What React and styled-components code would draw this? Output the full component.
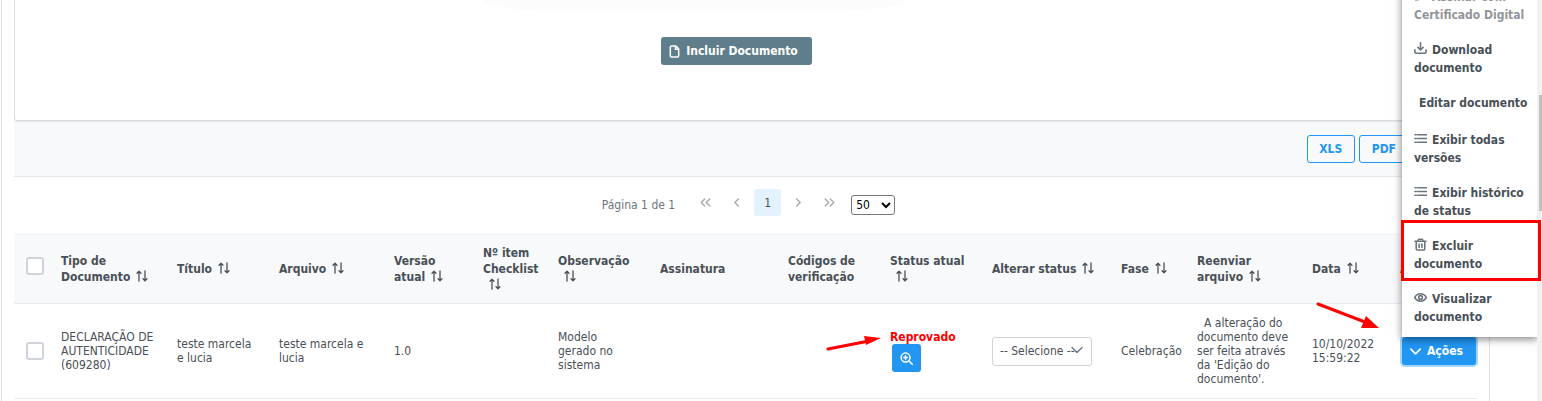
import React from "react";
import styled, { createGlobalStyle } from "styled-components";

const columns = [
  { label: "Tipo de Documento", width: 116, sortable: true },
  { label: "Título", width: 102, sortable: true },
  { label: "Arquivo", width: 115, sortable: true },
  { label: "Versão atual", width: 89, sortable: true },
  { label: "Nº item Checklist", width: 75, sortable: true },
  { label: "Observação", width: 102, sortable: true },
  { label: "Assinatura", width: 128 },
  { label: "Códigos de verificação", width: 102 },
  { label: "Status atual", width: 102, sortable: true },
  { label: "Alterar status", width: 129, sortable: true },
  { label: "Fase", width: 76, sortable: true },
  { label: "Reenviar arquivo", width: 115, sortable: true },
  { label: "Data", width: 88, sortable: true },
  { label: "Ações", width: 89 },
];

const menuItems = [
  { label: "Assinar com Certificado Digital", icon: "pencil", disabled: true },
  { label: "Download documento", icon: "download" },
  { label: "Editar documento" },
  { label: "Exibir todas versões", icon: "list" },
  { label: "Exibir histórico de status", icon: "list" },
  { label: "Excluir documento", icon: "trash", marked: true },
  { label: "Visualizar documento", icon: "eye" },
];

const paths = {
  file: <path d="M8.500 1H4A1.500 1.500 0 0 0 2.500 2.500v9A1.500 1.500 0 0 0 4 13h6a1.500 1.500 0 0 0 1.500-1.500V4zM8 1v3.500h3.500" />,
  pencil: <path d="M2 12l.6-3.300L9.300 2l2.700 2.700-6.700 6.700z" />,
  download: <path d="M7 .8v7.600M4.200 5.800L7 8.600l2.800-2.800M1 8.500v2.400a1.300 1.300 0 0 0 1.300 1.300h9.400a1.300 1.300 0 0 0 1.300-1.300V8.500" />,
  list: <path d="M1 3h1.400M4 3h9.500M1 7h1.400M4 7h9.500M1 11h1.400M4 11h9.500" />,
  trash: <path d="M1 3.500h12M4.500 3.500V2.300A1 1 0 0 1 5.500 1.300h3a1 1 0 0 1 1 1v1.200M2.400 3.500v8a1.400 1.400 0 0 0 1.400 1.400h6.400a1.400 1.400 0 0 0 1.400-1.400v-8M5.500 6.500v3.600M8.500 6.500v3.600" />,
  eye: (
    <>
      <path d="M.8 7C2.300 4.300 4.500 3 7 3s4.700 1.300 6.200 4C11.700 9.700 9.500 11 7 11S2.300 9.700.8 7z" />
      <circle cx="7" cy="7" r="2" />
    </>
  ),
  zoom: (
    <>
      <circle cx="6" cy="6" r="4.800" />
      <path d="M9.600 9.600L13.200 13.200M6 4v4M4 6h4" />
    </>
  ),
  down: <path d="M2 4.500l5 5 5-5" />,
  left: <path d="M9 3.200L5.200 7 9 10.800" />,
  right: <path d="M5 3.200L8.800 7 5 10.800" />,
  first: <path d="M6.200 3.200L2.400 7l3.800 3.800M11.600 3.200L7.800 7l3.800 3.800" />,
  last: <path d="M2.400 3.200L6.200 7l-3.800 3.800M7.800 3.200L11.600 7l-3.800 3.800" />,
  sort: <path d="M3.500 13V1.500M1.200 3.800l2.300-2.300 2.300 2.300M10.500 1v11.500M8.200 10.200l2.300 2.300 2.300-2.300" />,
};

const Icon = ({ name, size = 13, weight = 1.4, className }) => (
  <svg
    className={className}
    width={size}
    height={size}
    viewBox="0 0 14 14"
    fill="none"
    stroke="currentColor"
    strokeWidth={weight}
    strokeLinecap="round"
    strokeLinejoin="round"
    aria-hidden="true"
  >
    {paths[name]}
  </svg>
);

const Arrow = ({ className, width, height, line, head }) => (
  <svg className={className} width={width} height={height} aria-hidden="true">
    <path d={line} stroke="#ff0000" strokeWidth="3" strokeLinecap="round" />
    <path d={head} fill="#ff0000" />
  </svg>
);

const ActionsMenu = () => (
  <Menu>
    {menuItems.map((item) => (
      <MenuItem key={item.label}>
        <MenuLink href="#" $disabled={item.disabled}>
          {item.icon ? <MenuIcon name={item.icon} weight={1.7} /> : null}
          <MenuText>{item.label}</MenuText>
        </MenuLink>
        {item.marked ? <Highlight /> : null}
      </MenuItem>
    ))}
  </Menu>
);

const Pagination = () => (
  <Paginator aria-label="Paginação">
    <PageReport>Página 1 de 1</PageReport>
    <PageButtons>
      <PageButton type="button" aria-label="Primeira">
        <Icon name="first" size={13} weight={1.6} />
      </PageButton>
      <PageButton type="button" aria-label="Anterior">
        <Icon name="left" size={13} weight={1.6} />
      </PageButton>
      <PageButton type="button" $active>
        1
      </PageButton>
      <PageButton type="button" aria-label="Próxima">
        <Icon name="right" size={13} weight={1.6} />
      </PageButton>
      <PageButton type="button" aria-label="Última">
        <Icon name="last" size={13} weight={1.6} />
      </PageButton>
    </PageButtons>
    <RowsSelect aria-label="Linhas por página" defaultValue="50">
      <option value="50">50</option>
    </RowsSelect>
  </Paginator>
);

const DocumentsTable = () => (
  <Table>
    <colgroup>
      <Col $width={35} />
      {columns.map((c) => (
        <Col key={c.label} $width={c.width} />
      ))}
    </colgroup>
    <thead>
      <tr>
        <Th>
          <Checkbox type="checkbox" aria-label="Selecionar todos" />
        </Th>
        {columns.map((c) => (
          <Th key={c.label}>
            {c.label}
            {c.sortable ? <SortIcon name="sort" size={12} weight={1.5} /> : null}
          </Th>
        ))}
      </tr>
    </thead>
    <tbody>
      <tr>
        <Td>
          <Checkbox type="checkbox" aria-label="Selecionar documento" />
        </Td>
        <Td>DECLARAÇÃO DE AUTENTICIDADE (609280)</Td>
        <Td>teste marcela e lucia</Td>
        <Td>teste marcela e lucia</Td>
        <Td>1.0</Td>
        <Td />
        <Td>Modelo gerado no sistema</Td>
        <Td />
        <Td />
        <Td>
          <Anchor>
            <Status>Reprovado</Status>
            <ZoomButton type="button" aria-label="Ver status">
              <Icon name="zoom" size={13} weight={1.6} />
            </ZoomButton>
            <StatusArrow
              width={58}
              height={20}
              line="M3 16L44 8"
              head="M39 3L56 5L41 12Z"
            />
          </Anchor>
        </Td>
        <Td>
          <SelectWrapper>
            <StatusSelect aria-label="Alterar status">
              <option>-- Selecione --</option>
            </StatusSelect>
            <SelectChevron name="down" size={14} />
          </SelectWrapper>
        </Td>
        <Td>Celebração</Td>
        <Td>
          <Notice>
            A alteração do documento deve ser feita através da 'Edição do
            documento'.
          </Notice>
        </Td>
        <Td>10/10/2022 15:59:22</Td>
        <Td>
          <Anchor>
            <ActionsButton type="button">
              <Icon name="down" size={13} weight={1.8} />
              Ações
            </ActionsButton>
            <ActionsMenu />
            <ActionsArrow
              width={66}
              height={30}
              line="M3 3L50 21"
              head="M51 15L64 27L46 27Z"
            />
          </Anchor>
        </Td>
      </tr>
    </tbody>
  </Table>
);

export default function App() {
  return (
    <>
      <GlobalStyle />
      <Frame>
        <UploadPanel>
          <IncludeButton type="button">
            <Icon name="file" size={13} weight={1.6} />
            Incluir Documento
          </IncludeButton>
        </UploadPanel>
        <Toolbar>
          <ExportButton type="button">XLS</ExportButton>
          <ExportButton type="button">PDF</ExportButton>
        </Toolbar>
        <Pagination />
        <DocumentsTable />
      </Frame>
      <ScrollTrack>
        <ScrollThumb />
      </ScrollTrack>
    </>
  );
}

const GlobalStyle = createGlobalStyle`
  * {
    box-sizing: border-box;
  }

  body {
    margin: 0;
    overflow: hidden;
    background: #ffffff;
    color: #495057;
  }

  body, button, select, input {
    font-family: "DejaVu Sans Condensed", "DejaVu Sans", sans-serif;
    font-size: 12px;
  }
`;

const Frame = styled.main`
  min-height: 100vh;
  margin: 0 52px 0 1px;
  padding: 0 12px;
  border: 1px solid #dee2e6;
  border-width: 0 1px;
`;

const UploadPanel = styled.section`
  position: relative;
  display: flex;
  justify-content: center;
  padding: 37px 18px 55px 0;
  border: 1px solid #d9dde2;
  border-top: none;
  border-radius: 0 0 3px 3px;

  /* lower edge of the faded drop area */
  &::before {
    content: "";
    position: absolute;
    top: 0;
    left: 32%;
    width: 29%;
    height: 11px;
    border-radius: 0 0 80px 80px / 0 0 11px 11px;
    background: #fcfcfc;
  }
`;

const SolidButton = styled.button`
  display: inline-flex;
  align-items: center;
  height: 28px;
  border: none;
  border-radius: 3px;
  background: #2196f3;
  color: #ffffff;
  font-weight: 700;
`;

const IncludeButton = styled(SolidButton)`
  gap: 5px;
  padding: 0 14px 0 7px;
  background: #607d8b;
`;

const Toolbar = styled.div`
  display: flex;
  justify-content: flex-end;
  gap: 4px;
  padding: 13px 68px 13px 0;
  border: 1px solid #e3e8ec;
  border-width: 1px 0;
  background: #f8f9fa;
`;

const ExportButton = styled.button`
  min-width: 48px;
  height: 28px;
  padding: 0 11px;
  border: 1px solid #2196f3;
  border-radius: 3px;
  background: transparent;
  color: #2196f3;
  font-weight: 700;

  & + & {
    padding: 0 12px;
  }
`;

const Paginator = styled.nav`
  display: flex;
  justify-content: center;
  align-items: center;
  padding: 12px 0 17px 6px;
`;

const PageReport = styled.span`
  padding-top: 5px;
  margin-right: 17px;
  color: #6c757d;
`;

const PageButtons = styled.div`
  display: flex;
  gap: 4px;
`;

const PageButton = styled.button`
  display: flex;
  justify-content: center;
  align-items: center;
  width: 27px;
  height: 27px;
  padding: 0;
  border: none;
  border-radius: 3px;
  background: ${(p) => (p.$active ? "#e3f2fd" : "transparent")};
  color: ${(p) => (p.$active ? "#495057" : "#a6abb0")};
`;

const RowsSelect = styled.select`
  width: 44px;
  height: 20px;
  margin: 5px 0 0 8px;
  padding: 0;
  border: 1px solid #767676;
  border-radius: 3px;
  background: #ffffff;
  color: #000000;
`;

const Table = styled.table`
  width: 100%;
  table-layout: fixed;
  border-collapse: separate;
  border-spacing: 0;
`;

const Col = styled.col`
  width: ${(p) => p.$width}px;
`;

const Th = styled.th`
  height: 71px;
  padding: 2px 10px 0 12px;
  border-bottom: 1px solid #e9ecef;
  background: #f8f9fa;
  line-height: 16px;
  text-align: left;

  &:first-child {
    padding: 0 0 4px 12px;
  }
`;

const Td = styled.td`
  height: 95px;
  padding: 0 10px 0 12px;
  border-bottom: 1px solid #e9ecef;
  line-height: 14px;

  &:first-child,
  &:last-child {
    padding-right: 0;
  }
`;

const SortIcon = styled(Icon)`
  display: inline-block;
  margin-left: 6px;
  vertical-align: -1px;
`;

const Checkbox = styled.input`
  display: block;
  appearance: none;
  width: 18px;
  height: 18px;
  margin: 0;
  border: 2px solid #ced4da;
  border-radius: 3px;
  background: #ffffff;
`;

const Anchor = styled.div`
  position: relative;
`;

const Status = styled.div`
  color: #ff0000;
  font-weight: 700;
`;

const ZoomButton = styled(SolidButton)`
  justify-content: center;
  width: 29px;
  margin-left: 2px;
  padding: 0;
`;

const StatusArrow = styled(Arrow)`
  position: absolute;
  top: 3px;
  left: -65px;
`;

const SelectWrapper = styled.div`
  position: relative;
  width: 100px;
`;

const StatusSelect = styled.select`
  appearance: none;
  width: 100%;
  height: 29px;
  padding: 0 0 0 7px;
  border: 1px solid #ced4da;
  border-radius: 3px;
  background: #ffffff;
  color: #495057;
`;

const SelectChevron = styled(Icon)`
  position: absolute;
  top: 6px;
  right: 8px;
  color: #6c757d;
  pointer-events: none;
`;

const Notice = styled.div`
  text-indent: 7px;
`;

const ActionsButton = styled(SolidButton)`
  gap: 5px;
  margin-left: 2px;
  padding: 0 13px 0 7px;
  box-shadow: 0 0 0 2px #a6d5fa;
`;

const Menu = styled.ul`
  position: absolute;
  bottom: 100%;
  left: 2px;
  width: 136px;
  margin: 0;
  padding: 1px 0 3px;
  background: #ffffff;
  box-shadow: 0 2px 8px rgba(0, 0, 0, 0.5);
  list-style: none;
`;

const MenuItem = styled.li`
  position: relative;
`;

const MenuLink = styled.a`
  display: block;
  min-height: 37px;
  padding: 9px 8px 8px 12px;
  color: #495057;
  font-weight: 700;
  line-height: 18px;
  text-decoration: none;
  opacity: ${(p) => (p.$disabled ? 0.6 : 1)};
`;

const MenuIcon = styled(Icon)`
  color: #6c757d;
  vertical-align: -1px;
`;

const MenuText = styled.span`
  margin-left: 5px;
`;

const Highlight = styled.span`
  position: absolute;
  z-index: 3;
  top: -8px;
  right: -3px;
  bottom: 0;
  left: -1px;
  border: 3px solid #ff0000;
  pointer-events: none;
`;

const ActionsArrow = styled(Arrow)`
  position: absolute;
  top: -36px;
  left: -85px;
`;

const ScrollTrack = styled.div`
  position: fixed;
  z-index: 2;
  top: 0;
  right: 0;
  bottom: 0;
  width: 5px;
  background: #f1f1f1;
`;

const ScrollThumb = styled.div`
  height: 29%;
  margin: 95px 0 0 2px;
  background: #c1c1c1;
`;
